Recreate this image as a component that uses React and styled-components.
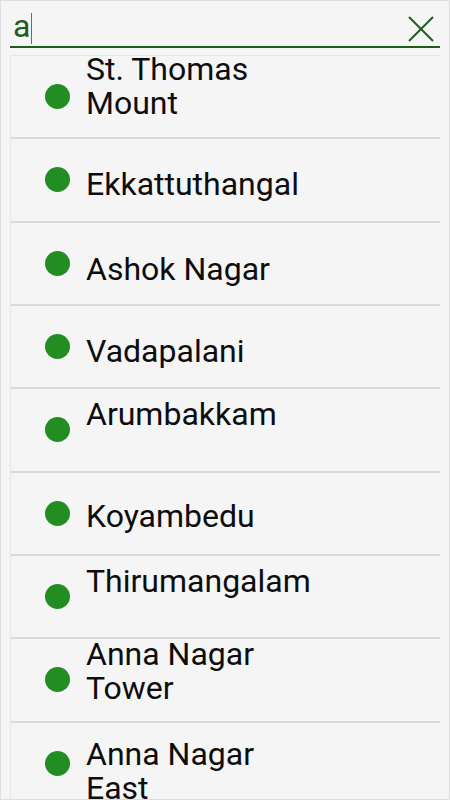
import styled, { createGlobalStyle } from 'styled-components';

const stations = [
  { name: 'St. Thomas Mount', capTop: 1.5 },
  { name: 'Ekkattuthangal', capTop: 33 },
  { name: 'Ashok Nagar', capTop: 34.5 },
  { name: 'Vadapalani', capTop: 33.5 },
  { name: 'Arumbakkam', capTop: 13 },
  { name: 'Koyambedu', capTop: 32 },
  { name: 'Thirumangalam', capTop: 13.7 },
  { name: 'Anna Nagar Tower', capTop: 2.5 },
  { name: 'Anna Nagar East', capTop: 19.6 },
];

// cap top of Roboto 32px inside a 34px line box
const CAP_IN_LINE = 5.2;

const App = () => {
  return (
    <>
      <GlobalStyle />
      <Frame>
        <SearchBar>
          <SearchText>a</SearchText>
          <Caret />
          <Spacer />
          <CloseButton aria-label="clear">
            <svg width="26" height="26" viewBox="0 0 26 26">
              <line x1="1" y1="1" x2="25" y2="25" stroke="#1d5e1d" strokeWidth="2" />
              <line x1="25" y1="1" x2="1" y2="25" stroke="#1d5e1d" strokeWidth="2" />
            </svg>
          </CloseButton>
        </SearchBar>
        <List>
          {stations.map(s => (
            <Row key={s.name}>
              <Dot />
              <Label $offset={s.capTop - CAP_IN_LINE}>{s.name}</Label>
            </Row>
          ))}
        </List>
      </Frame>
    </>
  );
};

const GlobalStyle = createGlobalStyle`
  html, body {
    margin: 0;
    padding: 0;
    background: #f5f5f5;
    font-family: Roboto, "Liberation Sans", sans-serif;
  }
`;

const Frame = styled.div`
  box-sizing: border-box;
  width: 450px;
  height: 800px;
  overflow: hidden;
  border: 1px solid #dddddd;
  background: #f5f5f5;
  padding: 0 9px;
`;

const SearchBar = styled.div`
  display: flex;
  align-items: flex-end;
  height: 47px;
  box-sizing: border-box;
  border-bottom: 2px solid #1d5e1d;
`;

const SearchText = styled.span`
  margin-left: 3px;
  font-size: 32px;
  line-height: 40px;
  color: #1d5e1d;
`;

const Caret = styled.span`
  width: 1px;
  height: 31px;
  margin: 0 0 2px 1px;
  background: #6b6b6b;
`;

const Spacer = styled.div`
  flex: 1;
`;

const CloseButton = styled.div`
  display: flex;
  margin: 0 6px 4px 0;
`;

const List = styled.div`
  margin-top: 7px;
  border-top: 1px solid #e6e6e6;
  border-left: 1px solid #e6e6e6;
`;

const Row = styled.div`
  display: flex;
  align-items: flex-start;
  box-sizing: border-box;
  height: 83.333px;
  border-bottom: 2px solid #d9d9d9;
`;

const Dot = styled.span`
  flex: none;
  align-self: center;
  width: 25px;
  height: 25px;
  margin-left: 34px;
  border-radius: 50%;
  background: #228d22;
`;

const Label = styled.div`
  width: 230px;
  margin: ${p => p.$offset}px 0 0 16px;
  font-size: 32px;
  line-height: 34px;
  color: #0d0d0d;
`;

export default App;
